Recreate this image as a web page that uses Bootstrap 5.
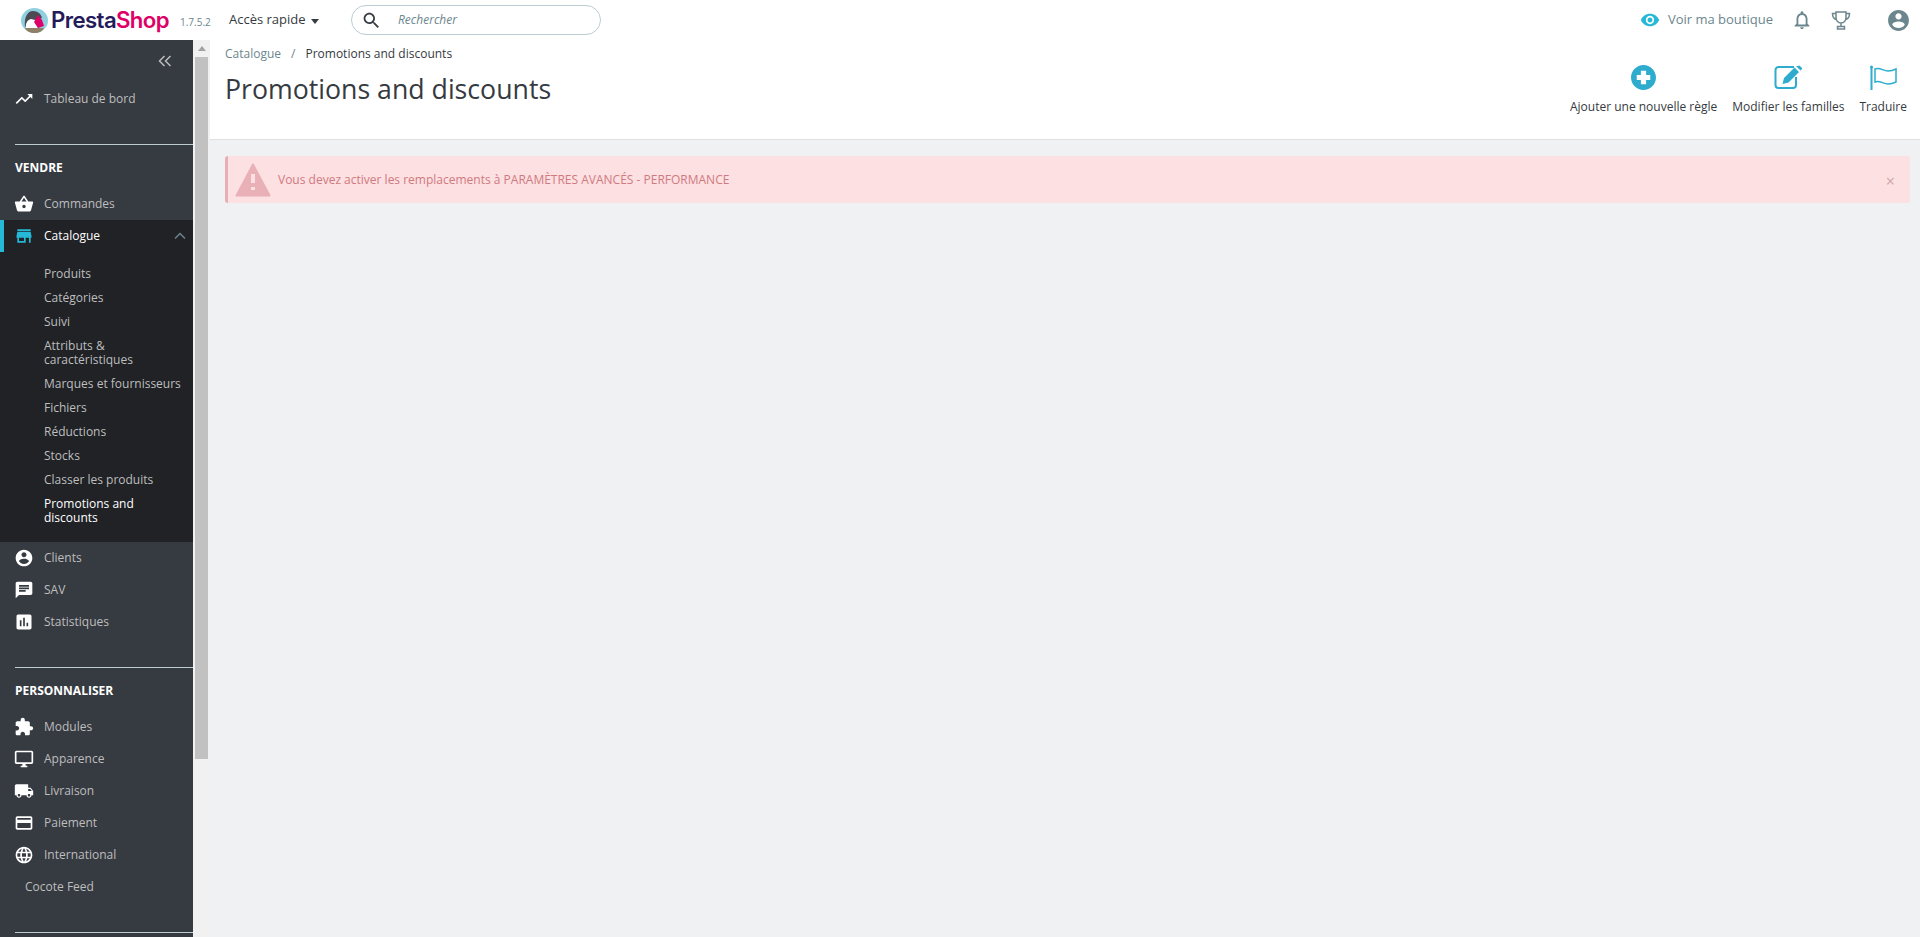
<!DOCTYPE html>
<html lang="fr">
<head>
<meta charset="utf-8">
<title>Promotions and discounts</title>
<link href="https://cdn.jsdelivr.net/npm/bootstrap@5.3.0/dist/css/bootstrap.min.css" rel="stylesheet">
<style>
html,body{height:100%;overflow:hidden}
body{font-family:"Open Sans","Liberation Sans",sans-serif;font-size:12px;color:#363a41;background:#eff1f2}
svg{display:block;fill:currentColor;flex:none}
.ps-top{height:40px;background:#fff}
.ps-logo{width:170px;padding-left:21px;gap:3px;flex:none}
.ps-brand{font-family:Inter,"Liberation Sans",sans-serif;font-weight:600;font-size:22.2px;letter-spacing:-.6px;color:#251b5b;line-height:40px}
.ps-brand b{font-weight:600;color:#df0067}
.ps-ver{font-size:10px;color:#6c868e;margin:4px 0 0 10px;width:49px;white-space:nowrap}
.ps-quick{font-size:13px;color:#363a41;width:122px;gap:5px}
.ps-caret{border-top:5px solid #363a41;border-left:4.5px solid transparent;border-right:4.5px solid transparent;margin-top:2px}
.ps-search{width:250px;height:30px;border:1px solid #bbcdd2;border-radius:15px;padding-left:9px;color:#363a41}
.ps-search em{margin-left:16px;font-size:12px;color:#6c868e}
.ps-shop{font-size:13px;color:#6c868e;gap:8px;margin-right:18px}
.ps-eye{color:#25b9d7}
.ps-grey{color:#6c868e}
.ps-bell{margin-right:18px}
.ps-trophy{margin-right:35px}
.ps-acct{margin-right:9px}
.ps-shell{height:897px}
.ps-side{width:193px;background:#363a41;color:#bebebe;overflow:hidden;flex:none}
.ps-collapse{height:43px;color:#bebebe;padding:0 21px 2px 0}
.ps-row{height:32px;padding-left:14px;color:#bebebe}
.ps-row svg{color:#fff;margin-right:10px}
.ps-row.ps-on{background:#202226;color:#fff;box-shadow:inset 4px 0 0 #25b9d7}
.ps-row.ps-on svg.ps-store{color:#25b9d7}
.ps-row.ps-on svg.ps-up{color:#6c868e;margin:0 7px 0 auto}
.ps-row.ps-plain{padding-left:25px}
.ps-rule{height:1px;background:#bbcdd2;margin-left:15px}
.ps-head{height:43px;padding:2px 0 0 15px;color:#fff;font-weight:700}
.ps-gap-a{margin-top:29px}
.ps-gap-b{margin-top:29px}
.ps-gap-c{margin-top:29px}
.ps-sub{background:#202226;padding:10px 0 12px}
.ps-sub div{padding:5px 8px 5px 44px;line-height:14px;color:#bebebe}
.ps-sub div.ps-cur{color:#fff;font-weight:500}
.ps-track{width:17px;background:#f1f1f1;flex:none}
.ps-arrow{height:17px}
.ps-tri{border-bottom:5px solid #a3a3a3;border-left:4px solid transparent;border-right:4px solid transparent}
.ps-thumb{height:702px;background:#c1c1c1;margin:0 2px}
.ps-main{min-width:0}
.ps-pagehead{height:100px;background:#fff;border-bottom:1px solid #dfdfdf;padding:0 13px 0 15px}
.ps-crumb{padding-top:6px;line-height:16px;font-size:12px;gap:10px}
.ps-crumb span:first-child{color:#6c868e}
.ps-crumb i{font-style:normal;color:#6c868e}
.ps-title{font-size:26.7px;font-weight:400;line-height:38px;margin:8px 0 0;color:#363a41}
.ps-acts{gap:15px;padding-top:25px}
.ps-act{color:#363a41;font-size:12px;line-height:16px;gap:9px}
.ps-act svg{color:#2eacce}
.ps-alert{margin:16px 10px 0 15px;height:47px;padding:0;background:#fde0e2;border:0;border-left:3px solid #e8aeb5;border-radius:3px;color:#cf7a80}
.ps-alert svg{color:#e9b0b7;margin:0 7px 0 7px}
.ps-x{font-size:16px;line-height:1;color:#cfa5aa;margin:2px 15px 0 auto}
</style>
</head>
<body>
<header class="ps-top d-flex align-items-center">
  <div class="ps-logo d-flex align-items-center">
    <svg width="27" height="25" viewBox="0 0 27 25"><ellipse cx="13.500" cy="12.500" rx="13.500" ry="12.500" fill="#8fd0e0"/><path d="M4 19C3 10 6 3 12 3c5 0 8 3 9 7l-7 2-3 9z" fill="#4c4a54"/><path d="M5 21c-1-5 1-9 5-10l4 1 3 9z" fill="#fff"/><path d="M17 7l4 5 2 6-6 2-4-6z" fill="#df0067"/><path d="M4 20h19c-1 3-5 5-9.500 5S5 23 4 20z" fill="#8f8068"/></svg>
    <span class="ps-brand">Presta<b>Shop</b></span>
  </div>
  <span class="ps-ver">1.7.5.2</span>
  <div class="ps-quick d-flex align-items-center">Accès rapide <span class="ps-caret"></span></div>
  <div class="ps-search d-flex align-items-center">
    <svg width="21" height="21" viewBox="0 0 24 24"><path d="M15.500 14h-.79l-.28-.27C15.410 12.590 16 11.110 16 9.500 16 5.910 13.090 3 9.500 3S3 5.910 3 9.500 5.910 16 9.500 16c1.610 0 3.090-.59 4.230-1.570l.27.28v.79l5 4.990L20.490 19l-4.990-5zm-6 0C7.010 14 5 11.990 5 9.500S7.010 5 9.500 5 14 7.010 14 9.500 11.990 14 9.500 14z"/></svg>
    <em>Rechercher</em>
  </div>
  <div class="ps-shop d-flex align-items-center ms-auto">
    <svg class="ps-eye" width="20" height="20" viewBox="0 0 24 24"><path d="M12 4.500C7 4.500 2.730 7.610 1 12c1.730 4.390 6 7.500 11 7.500s9.270-3.110 11-7.500c-1.730-4.390-6-7.500-11-7.500zM12 17c-2.760 0-5-2.240-5-5s2.240-5 5-5 5 2.240 5 5-2.240 5-5 5zm0-8c-1.660 0-3 1.340-3 3s1.340 3 3 3 3-1.340 3-3-1.340-3-3-3z"/></svg>
    <span>Voir ma boutique</span>
  </div>
  <svg class="ps-grey ps-bell" width="22" height="22" viewBox="0 0 24 24"><path d="M12 22c1.100 0 2-.9 2-2h-4c0 1.100.9 2 2 2zm6-6v-5c0-3.070-1.630-5.640-4.500-6.320V4c0-.83-.67-1.500-1.500-1.500s-1.500.67-1.500 1.500v.68C7.640 5.360 6 7.920 6 11v5l-2 2v1h16v-1l-2-2zm-2 1H8v-6c0-2.480 1.510-4.500 4-4.500s4 2.020 4 4.500v6z"/></svg>
  <svg class="ps-grey ps-trophy" width="20" height="20" viewBox="0 0 20 20"><path d="M5 2h10v6a5 5 0 0 1-10 0zM5 3.500H1.500c0 3.500 1.500 5.500 4 6M15 3.500h3.500c0 3.500-1.500 5.500-4 6M10 13v3M6.500 16.500h7v2.500h-7z" fill="none" stroke="currentColor" stroke-width="1.500"/></svg>
  <svg class="ps-grey ps-acct" width="25" height="25" viewBox="0 0 24 24"><path d="M12 2C6.480 2 2 6.480 2 12s4.480 10 10 10 10-4.480 10-10S17.520 2 12 2zm0 3c1.660 0 3 1.340 3 3s-1.340 3-3 3-3-1.340-3-3 1.340-3 3-3zm0 14.200c-2.500 0-4.710-1.280-6-3.220.03-1.990 4-3.080 6-3.080 1.990 0 5.970 1.090 6 3.080-1.290 1.940-3.500 3.220-6 3.220z"/></svg>
</header>
<div class="ps-shell d-flex">
  <nav class="ps-side">
    <div class="ps-collapse d-flex align-items-center justify-content-end">
      <svg width="14" height="12" viewBox="0 0 14 12"><path d="M6.500 1 1.500 6l5 5M12.500 1l-5 5 5 5" fill="none" stroke="currentColor" stroke-width="1.500"/></svg>
    </div>
    <div class="ps-row d-flex align-items-center"><svg width="20" height="20" viewBox="0 0 24 24"><path d="M16 6l2.290 2.290-4.880 4.880-4-4L2 16.590 3.410 18l6-6 4 4 6.300-6.290L22 12V6z"/></svg>Tableau de bord</div>
    <div class="ps-rule ps-gap-a"></div>
    <div class="ps-head d-flex align-items-center">VENDRE</div>
    <div class="ps-row d-flex align-items-center"><svg width="20" height="20" viewBox="0 0 24 24"><path d="M17.210 9l-4.380-6.560c-.19-.28-.51-.42-.83-.42-.32 0-.64.14-.83.43L6.790 9H2c-.55 0-1 .45-1 1 0 .09.01.18.04.27l2.540 9.270c.23.84 1 1.460 1.920 1.460h13c.92 0 1.690-.62 1.930-1.460l2.540-9.270L23 10c0-.55-.45-1-1-1h-4.790zM9 9l3-4.400L15 9H9zm3 8c-1.100 0-2-.9-2-2s.9-2 2-2 2 .9 2 2-.9 2-2 2z"/></svg>Commandes</div>
    <div class="ps-row ps-on d-flex align-items-center"><svg class="ps-store" width="20" height="20" viewBox="0 0 24 24"><path d="M20 4H4v2h16V4zm1 10v-2l-1-5H4l-1 5v2h1v6h10v-6h4v6h2v-6h1zm-9 4H6v-4h6v4z"/></svg>Catalogue<svg class="ps-up" width="12" height="8" viewBox="0 0 12 8"><path d="M1 6.500l5-5 5 5" fill="none" stroke="currentColor" stroke-width="1.500"/></svg></div>
    <div class="ps-sub">
      <div>Produits</div>
      <div>Catégories</div>
      <div>Suivi</div>
      <div>Attributs &amp; caractéristiques</div>
      <div>Marques et fournisseurs</div>
      <div>Fichiers</div>
      <div>Réductions</div>
      <div>Stocks</div>
      <div>Classer les produits</div>
      <div class="ps-cur">Promotions and discounts</div>
    </div>
    <div class="ps-row d-flex align-items-center"><svg width="20" height="20" viewBox="0 0 24 24"><path d="M12 2C6.480 2 2 6.480 2 12s4.480 10 10 10 10-4.480 10-10S17.520 2 12 2zm0 3c1.660 0 3 1.340 3 3s-1.340 3-3 3-3-1.340-3-3 1.340-3 3-3zm0 14.200c-2.500 0-4.710-1.280-6-3.220.03-1.990 4-3.080 6-3.080 1.990 0 5.970 1.090 6 3.080-1.290 1.940-3.500 3.220-6 3.220z"/></svg>Clients</div>
    <div class="ps-row d-flex align-items-center"><svg width="20" height="20" viewBox="0 0 24 24"><path d="M20 2H4c-1.100 0-1.990.9-1.990 2L2 22l4-4h14c1.100 0 2-.9 2-2V4c0-1.100-.9-2-2-2zM6 9h12v2H6V9zm8 5H6v-2h8v2zm4-6H6V6h12v2z"/></svg>SAV</div>
    <div class="ps-row d-flex align-items-center"><svg width="20" height="20" viewBox="0 0 24 24"><path d="M19 3H5c-1.100 0-2 .9-2 2v14c0 1.100.9 2 2 2h14c1.100 0 2-.9 2-2V5c0-1.100-.9-2-2-2zM9 17H7v-7h2v7zm4 0h-2V7h2v10zm4 0h-2v-4h2v4z"/></svg>Statistiques</div>
    <div class="ps-rule ps-gap-b"></div>
    <div class="ps-head d-flex align-items-center">PERSONNALISER</div>
    <div class="ps-row d-flex align-items-center"><svg width="20" height="20" viewBox="0 0 24 24"><path d="M20.500 11H19V7c0-1.100-.9-2-2-2h-4V3.500C13 2.120 11.880 1 10.500 1S8 2.120 8 3.500V5H4c-1.100 0-1.990.9-1.990 2v3.800H3.500c1.490 0 2.700 1.210 2.700 2.700s-1.210 2.700-2.700 2.700H2V20c0 1.100.9 2 2 2h3.800v-1.500c0-1.490 1.210-2.700 2.700-2.700 1.490 0 2.700 1.210 2.700 2.700V22H17c1.100 0 2-.9 2-2v-4h1.500c1.380 0 2.500-1.120 2.500-2.500S21.880 11 20.500 11z"/></svg>Modules</div>
    <div class="ps-row d-flex align-items-center"><svg width="20" height="20" viewBox="0 0 24 24"><path d="M21 2H3c-1.100 0-2 .9-2 2v12c0 1.100.9 2 2 2h7v2H8v2h8v-2h-2v-2h7c1.100 0 2-.9 2-2V4c0-1.100-.9-2-2-2zm0 14H3V4h18v12z"/></svg>Apparence</div>
    <div class="ps-row d-flex align-items-center"><svg width="20" height="20" viewBox="0 0 24 24"><path d="M20 8h-3V4H3c-1.100 0-2 .9-2 2v11h2c0 1.660 1.340 3 3 3s3-1.340 3-3h6c0 1.660 1.340 3 3 3s3-1.340 3-3h2v-5l-3-4zM6 18.500c-.83 0-1.500-.67-1.500-1.500s.67-1.500 1.500-1.500 1.500.67 1.500 1.500-.67 1.500-1.500 1.500zm13.500-9l1.960 2.500H17V9.500h2.500zm-1.500 9c-.83 0-1.500-.67-1.500-1.500s.67-1.500 1.500-1.500 1.500.67 1.500 1.500-.67 1.500-1.500 1.500z"/></svg>Livraison</div>
    <div class="ps-row d-flex align-items-center"><svg width="20" height="20" viewBox="0 0 24 24"><path d="M20 4H4c-1.110 0-1.990.89-1.990 2L2 18c0 1.110.89 2 2 2h16c1.110 0 2-.89 2-2V6c0-1.110-.89-2-2-2zm0 14H4v-6h16v6zm0-10H4V6h16v2z"/></svg>Paiement</div>
    <div class="ps-row d-flex align-items-center"><svg width="20" height="20" viewBox="0 0 24 24"><path d="M11.990 2C6.470 2 2 6.480 2 12s4.470 10 9.990 10C17.520 22 22 17.520 22 12S17.520 2 11.990 2zm6.930 6h-2.950c-.32-1.250-.78-2.450-1.380-3.560 1.840.63 3.370 1.910 4.330 3.560zM12 4.040c.83 1.200 1.480 2.530 1.910 3.960h-3.820c.43-1.430 1.080-2.760 1.910-3.960zM4.260 14C4.100 13.360 4 12.690 4 12s.1-1.360.26-2h3.380c-.08.66-.14 1.320-.14 2 0 .68.06 1.340.14 2H4.260zm.82 2h2.950c.32 1.250.78 2.450 1.380 3.560-1.840-.63-3.370-1.900-4.330-3.560zm2.950-8H5.080c.96-1.660 2.490-2.930 4.330-3.560C8.810 5.550 8.350 6.750 8.030 8zM12 19.960c-.83-1.200-1.480-2.530-1.910-3.960h3.820c-.43 1.430-1.080 2.760-1.910 3.960zM14.340 14H9.660c-.09-.66-.16-1.320-.16-2 0-.68.07-1.350.16-2h4.680c.09.650.16 1.320.16 2 0 .68-.07 1.340-.16 2zm.25 5.560c.6-1.110 1.060-2.310 1.380-3.560h2.950c-.96 1.650-2.490 2.930-4.330 3.560zM16.360 14c.08-.66.14-1.320.14-2 0-.68-.06-1.340-.14-2h3.380c.16.64.26 1.310.26 2s-.1 1.360-.26 2h-3.380z"/></svg>International</div>
    <div class="ps-row ps-plain d-flex align-items-center">Cocote Feed</div>
    <div class="ps-rule ps-gap-c"></div>
  </nav>
  <div class="ps-track">
    <div class="ps-arrow d-flex align-items-center justify-content-center"><span class="ps-tri"></span></div>
    <div class="ps-thumb"></div>
  </div>
  <main class="ps-main flex-grow-1">
    <div class="ps-pagehead d-flex justify-content-between">
      <div>
        <div class="ps-crumb d-flex"><span>Catalogue</span><i>/</i><span>Promotions and discounts</span></div>
        <h1 class="ps-title">Promotions and discounts</h1>
      </div>
      <div class="ps-acts d-flex">
        <div class="ps-act d-flex flex-column align-items-center"><svg width="25" height="25" viewBox="0 0 24 24"><path fill-rule="evenodd" d="M12 0C5.400 0 0 5.400 0 12s5.400 12 12 12 12-5.400 12-12S18.600 0 12 0zM9.500 5.500h5v4h4v5h-4v4h-5v-4h-4v-5h4z"/></svg><span>Ajouter une nouvelle règle</span></div>
        <div class="ps-act d-flex flex-column align-items-center"><svg width="28" height="25" viewBox="0 0 28 25"><path d="M20 2H4.500A3 3 0 0 0 1.500 5v15a3 3 0 0 0 3 3H19a3 3 0 0 0 3-3v-8" fill="none" stroke="currentColor" stroke-width="2"/><path d="M10 13l-1.500 6 6-1.500L25 7l-4.500-4.500zM22 1l4.500 4.500 1-1a1.300 1.300 0 0 0 0-2L26 1a1.300 1.300 0 0 0-2 0z"/></svg><span>Modifier les familles</span></div>
        <div class="ps-act d-flex flex-column align-items-center"><svg width="27" height="25" viewBox="0 0 27 25"><circle cx="1.500" cy="2" r="1.500"/><path d="M1.500 2v23" fill="none" stroke="currentColor" stroke-width="2"/><path d="M5 4c5-2 8 2 13 2 3 0 6-1 8-2v13c-2 1-5 2-8 2-5 0-8-4-13-2z" fill="none" stroke="currentColor" stroke-width="1.500"/></svg><span>Traduire</span></div>
      </div>
    </div>
    <div class="alert ps-alert d-flex align-items-center" role="alert">
      <svg width="36" height="34" viewBox="0 0 36 34"><path fill-rule="evenodd" stroke="currentColor" stroke-width="2" stroke-linejoin="round" d="M18 1.500 1.500 32.500h33zM15 10h6v11h-6zM15 23h6v5h-6z"/></svg>
      <span>Vous devez activer les remplacements à PARAMÈTRES AVANCÉS - PERFORMANCE</span>
      <span class="ps-x">×</span>
    </div>
  </main>
</div>
<script src="https://cdn.jsdelivr.net/npm/bootstrap@5.3.0/dist/js/bootstrap.bundle.min.js"></script>
</body>
</html>
